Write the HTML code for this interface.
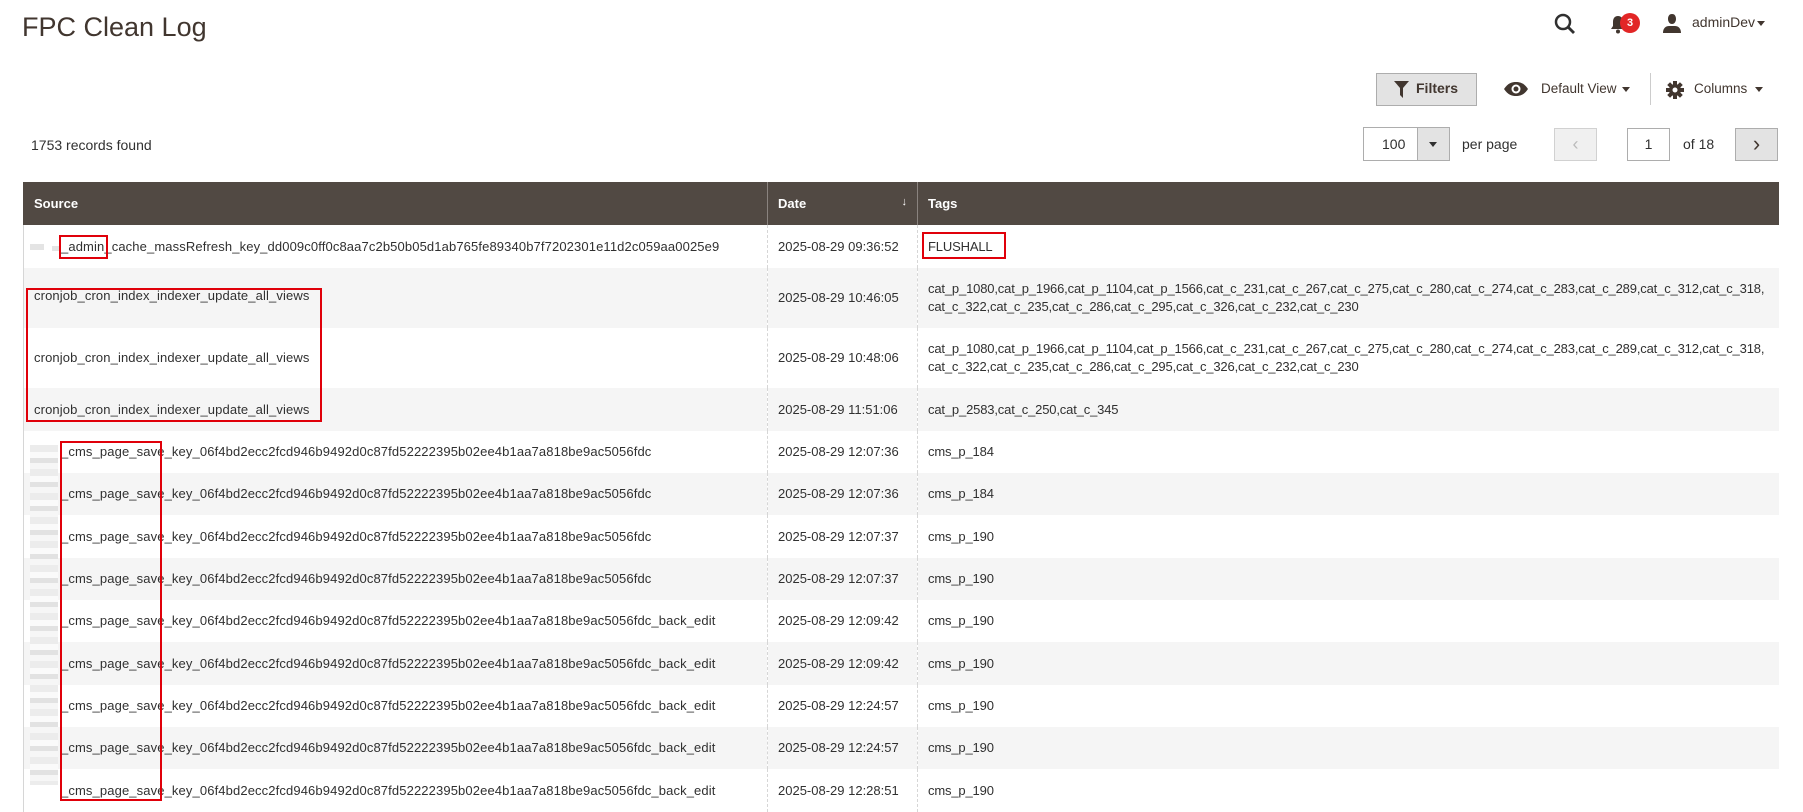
<!DOCTYPE html>
<html><head><meta charset="utf-8"><style>
*{box-sizing:border-box;margin:0;padding:0}
body{width:1803px;height:811px;overflow:hidden;background:#fff;font-family:"Liberation Sans",Arial,sans-serif;color:#303030;position:relative}
.a{position:absolute}
h1{position:absolute;left:22px;top:12px;font-size:27px;font-weight:normal;color:#41362f}
.btn{border:1px solid #adadad;background:#e3e3e3}
table{position:absolute;left:23px;top:182px;width:1755px;border-collapse:collapse;table-layout:fixed;font-size:13px}
th{background:#514943;color:#fff;text-align:left;font-weight:bold;height:43px;padding:0 10px;border-left:1px solid #8a837f;font-size:13px}
th:first-child{border-left:1px solid #514943}
td{padding:0 10px;border-left:1px dashed #d6d6d6;vertical-align:middle;line-height:18px;white-space:nowrap;overflow:hidden}
td:first-child{border-left:1px solid #d6d6d6;letter-spacing:0.12px}
td:nth-child(3){letter-spacing:-0.16px}
tr:nth-child(odd) td{background:#f5f5f5}
.red{position:absolute;border:2px solid #e0000a}
.px{position:absolute;background:#e4e4e4}
</style></head><body>
<h1>FPC Clean Log</h1>
<svg class="a" style="left:1554px;top:13px" width="22" height="22" viewBox="0 0 22 22"><circle cx="9" cy="9" r="7" fill="none" stroke="#303030" stroke-width="2.5"/><path d="M14 14l6 6" stroke="#303030" stroke-width="2.8"/></svg>
<svg class="a" style="left:1610px;top:15px" width="16" height="19" viewBox="0 0 16 19"><path d="M8 1c-3.5 0-5 2.5-5 6v4l-2 3h14l-2-3V7c0-3.5-1.5-6-5-6z" fill="#41362f"/><circle cx="8" cy="16.5" r="2" fill="#41362f"/></svg>
<div class="a" style="left:1620px;top:13px;width:20px;height:20px;border-radius:50%;background:#e22626;color:#fff;font-size:11px;font-weight:bold;text-align:center;line-height:20px">3</div>
<svg class="a" style="left:1662px;top:13px" width="20" height="20" viewBox="0 0 20 20"><path d="M10 1c-3 0-4 2.5-4 5s1.5 5 4 5 4-2.5 4-5-1-5-4-5zM1 20c0-5 3-7 6-7h6c3 0 6 2 6 7z" fill="#41362f"/></svg>
<div class="a" style="left:1692px;top:14px;font-size:14px;color:#41362f">adminDev</div>
<div class="a" style="left:1757px;top:21px;border:4px solid transparent;border-top:5px solid #41362f"></div>
<div class="a btn" style="left:1376px;top:73px;width:101px;height:33px"></div>
<svg class="a" style="left:1394px;top:81px" width="15" height="17" viewBox="0 0 15 17"><path d="M0 0h15L9 7v10L6 14V7z" fill="#41362f"/></svg>
<div class="a" style="left:1416px;top:80px;font-size:14px;font-weight:bold;color:#41362f">Filters</div>
<svg class="a" style="left:1504px;top:82px" width="24" height="14" viewBox="0 0 24 14"><path d="M0 7C4 1 8 0 12 0s8 1 12 7c-4 6-8 7-12 7S4 13 0 7z" fill="#41362f"/><circle cx="12" cy="7" r="4.5" fill="#fff"/><circle cx="12" cy="7" r="2.5" fill="#41362f"/></svg>
<div class="a" style="left:1541px;top:81px;font-size:13.5px;color:#41362f">Default View</div>
<div class="a" style="left:1622px;top:87px;border:4px solid transparent;border-top:5px solid #41362f"></div>
<div class="a" style="left:1650px;top:73px;width:1px;height:32px;background:#ccc"></div>
<svg class="a" style="left:1666px;top:81px" width="18" height="18" viewBox="0 0 18 18"><g fill="#41362f"><circle cx="9" cy="9" r="6"/><rect x="7" y="0" width="4" height="18"/><rect x="0" y="7" width="18" height="4"/><rect x="7" y="0" width="4" height="18" transform="rotate(45 9 9)"/><rect x="7" y="0" width="4" height="18" transform="rotate(-45 9 9)"/></g><circle cx="9" cy="9" r="2.5" fill="#fff"/></svg>
<div class="a" style="left:1694px;top:81px;font-size:13.5px;color:#41362f">Columns</div>
<div class="a" style="left:1755px;top:87px;border:4px solid transparent;border-top:5px solid #41362f"></div>
<div class="a" style="left:31px;top:137px;font-size:14px">1753 records found</div>
<div class="a" style="left:1363px;top:127px;width:87px;height:34px;border:1px solid #adadad"></div>
<div class="a" style="left:1417px;top:128px;width:32px;height:32px;background:#e3e3e3;border-left:1px solid #adadad"></div>
<div class="a" style="left:1382px;top:136px;font-size:14px">100</div>
<div class="a" style="left:1429px;top:142px;border:4px solid transparent;border-top:5px solid #303030"></div>
<div class="a" style="left:1462px;top:136px;font-size:14px">per page</div>
<div class="a" style="left:1554px;top:128px;width:43px;height:33px;border:1px solid #d1d1d1;background:#f0f0f0;color:#bbb;text-align:center;line-height:30px;font-size:18px">&#8249;</div>
<div class="a" style="left:1627px;top:128px;width:43px;height:33px;border:1px solid #adadad;text-align:center;line-height:31px;font-size:14px">1</div>
<div class="a" style="left:1683px;top:136px;font-size:14px">of 18</div>
<div class="a btn" style="left:1735px;top:128px;width:43px;height:33px;text-align:center;line-height:29px;font-size:22px;color:#41362f">&#8250;</div>
<table>
<colgroup><col style="width:744px"><col style="width:150px"><col style="width:861px"></colgroup>
<tr><th>Source</th><th>Date<span style="float:right;font-weight:normal;font-size:11px">&#8595;</span></th><th>Tags</th></tr>
<tr style="height:43px"><td style="padding-left:37px">_admin_cache_massRefresh_key_dd009c0ff0c8aa7c2b50b05d1ab765fe89340b7f7202301e11d2c059aa0025e9</td><td>2025-08-29 09:36:52</td><td>FLUSHALL</td></tr>
<tr style="height:60px"><td style="vertical-align:top;padding-top:19px">cronjob_cron_index_indexer_update_all_views</td><td>2025-08-29 10:46:05</td><td>cat_p_1080,cat_p_1966,cat_p_1104,cat_p_1566,cat_c_231,cat_c_267,cat_c_275,cat_c_280,cat_c_274,cat_c_283,cat_c_289,cat_c_312,cat_c_318,<br>cat_c_322,cat_c_235,cat_c_286,cat_c_295,cat_c_326,cat_c_232,cat_c_230</td></tr>
<tr style="height:60px"><td>cronjob_cron_index_indexer_update_all_views</td><td>2025-08-29 10:48:06</td><td>cat_p_1080,cat_p_1966,cat_p_1104,cat_p_1566,cat_c_231,cat_c_267,cat_c_275,cat_c_280,cat_c_274,cat_c_283,cat_c_289,cat_c_312,cat_c_318,<br>cat_c_322,cat_c_235,cat_c_286,cat_c_295,cat_c_326,cat_c_232,cat_c_230</td></tr>
<tr style="height:43px"><td>cronjob_cron_index_indexer_update_all_views</td><td>2025-08-29 11:51:06</td><td>cat_p_2583,cat_c_250,cat_c_345</td></tr>
<tr style="height:42px"><td style="padding-left:37px">_cms_page_save_key_06f4bd2ecc2fcd946b9492d0c87fd52222395b02ee4b1aa7a818be9ac5056fdc</td><td>2025-08-29 12:07:36</td><td>cms_p_184</td></tr>
<tr style="height:42px"><td style="padding-left:37px">_cms_page_save_key_06f4bd2ecc2fcd946b9492d0c87fd52222395b02ee4b1aa7a818be9ac5056fdc</td><td>2025-08-29 12:07:36</td><td>cms_p_184</td></tr>
<tr style="height:43px"><td style="padding-left:37px">_cms_page_save_key_06f4bd2ecc2fcd946b9492d0c87fd52222395b02ee4b1aa7a818be9ac5056fdc</td><td>2025-08-29 12:07:37</td><td>cms_p_190</td></tr>
<tr style="height:42px"><td style="padding-left:37px">_cms_page_save_key_06f4bd2ecc2fcd946b9492d0c87fd52222395b02ee4b1aa7a818be9ac5056fdc</td><td>2025-08-29 12:07:37</td><td>cms_p_190</td></tr>
<tr style="height:42px"><td style="padding-left:37px">_cms_page_save_key_06f4bd2ecc2fcd946b9492d0c87fd52222395b02ee4b1aa7a818be9ac5056fdc_back_edit</td><td>2025-08-29 12:09:42</td><td>cms_p_190</td></tr>
<tr style="height:43px"><td style="padding-left:37px">_cms_page_save_key_06f4bd2ecc2fcd946b9492d0c87fd52222395b02ee4b1aa7a818be9ac5056fdc_back_edit</td><td>2025-08-29 12:09:42</td><td>cms_p_190</td></tr>
<tr style="height:42px"><td style="padding-left:37px">_cms_page_save_key_06f4bd2ecc2fcd946b9492d0c87fd52222395b02ee4b1aa7a818be9ac5056fdc_back_edit</td><td>2025-08-29 12:24:57</td><td>cms_p_190</td></tr>
<tr style="height:42px"><td style="padding-left:37px">_cms_page_save_key_06f4bd2ecc2fcd946b9492d0c87fd52222395b02ee4b1aa7a818be9ac5056fdc_back_edit</td><td>2025-08-29 12:24:57</td><td>cms_p_190</td></tr>
<tr style="height:43px"><td style="padding-left:37px">_cms_page_save_key_06f4bd2ecc2fcd946b9492d0c87fd52222395b02ee4b1aa7a818be9ac5056fdc_back_edit</td><td>2025-08-29 12:28:51</td><td>cms_p_190</td></tr>
</table>
<div class="px" style="left:30px;top:244px;width:14px;height:6px"></div>
<div class="px" style="left:52px;top:246px;width:8px;height:5px"></div>
<div class="px" style="left:30px;top:445px;width:28px;height:340px;background:repeating-linear-gradient(180deg,#ececec 0 7px,#fafafa 7px 13px,#e2e2e2 13px 18px,#f6f6f6 18px 24px)"></div>
<div class="red" style="left:59px;top:235px;width:49px;height:24px"></div>
<div class="red" style="left:26px;top:288px;width:296px;height:134px"></div>
<div class="red" style="left:60px;top:441px;width:102px;height:360px"></div>
<div class="red" style="left:922px;top:232px;width:84px;height:27px"></div>
</body></html>
